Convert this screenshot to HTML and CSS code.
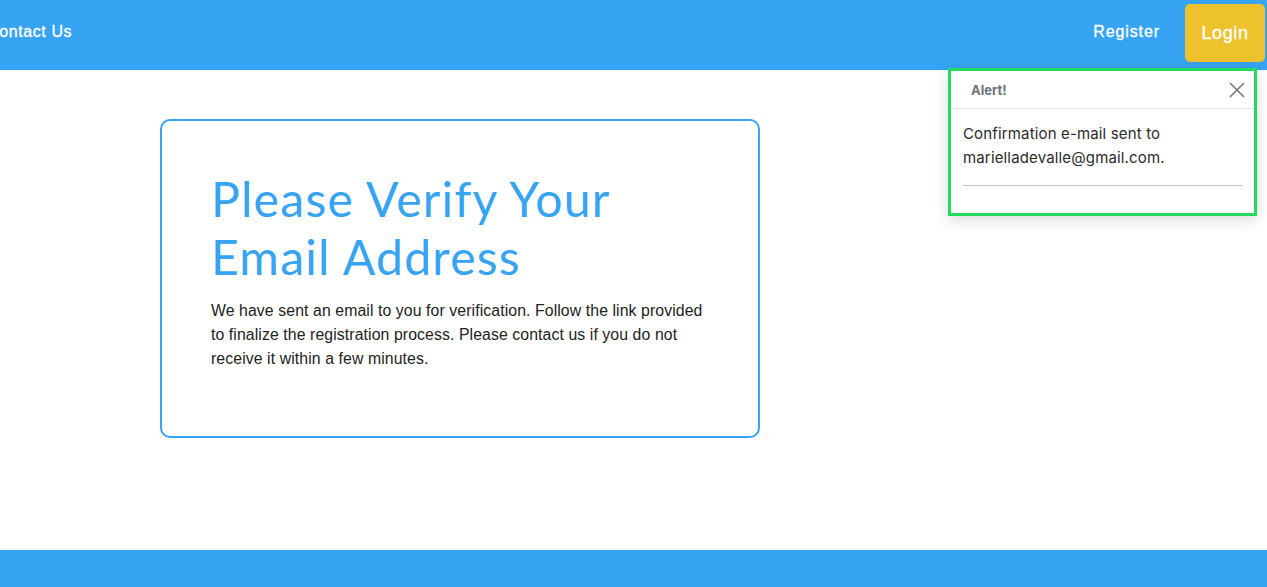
FILE: index.html
```html
<!DOCTYPE html>
<html lang="en">
<head>
<meta charset="utf-8">
<title>Verify Email</title>
<link rel="stylesheet" href="styles.css">
</head>
<body>
<header class="topbar">
  <nav class="nav-left">
    <a class="nav-link" href="#">Contact Us</a>
  </nav>
  <nav class="nav-right">
    <a class="nav-link" href="#">Register</a>
    <a class="login-btn" href="#">Login</a>
  </nav>
</header>

<main class="main">
  <section class="card">
    <h1 class="card-title">Please Verify Your Email Address</h1>
    <p class="card-text">We have sent an email to you for verification. Follow the link provided to finalize the registration process. Please contact us if you do not receive it within a few minutes.</p>
  </section>
</main>

<footer class="footer"></footer>

<div class="toast">
  <div class="toast-header">
    <strong class="toast-title">Alert!</strong>
    <button class="toast-close" aria-label="Close">
      <svg width="16" height="16" viewBox="0 0 16 16"><path d="M1 1 L15 15 M15 1 L1 15" stroke="#7a7a7a" stroke-width="1.6" fill="none"/></svg>
    </button>
  </div>
  <div class="toast-body">
    <p class="toast-text">Confirmation e-mail sent to marielladevalle@gmail.com.</p>
    <hr class="toast-rule">
  </div>
</div>
</body>
</html>
```

FILE: styles.css
```css
html, body {
  margin: 0;
  padding: 0;
}
body {
  font-family: "Liberation Sans", Arial, sans-serif;
  background: #ffffff;
  position: relative;
  min-height: 587px;
}
.topbar {
  height: 70px;
  background: #36a3f3;
  display: flex;
  align-items: flex-start;
  justify-content: space-between;
}
.nav-left {
  display: flex;
  margin-left: -13px;
  padding-top: 23px;
}
.nav-link {
  color: #ffffff;
  text-decoration: none;
  font-size: 16px;
  font-weight: 400;
  letter-spacing: 0.6px;
  line-height: 18px;
  -webkit-text-stroke: 0.3px #ffffff;
}
.nav-right {
  display: flex;
  align-items: flex-start;
  gap: 25px;
  padding-top: 4px;
  margin-right: 2px;
}
.nav-right .nav-link {
  padding-top: 19px;
  letter-spacing: 0.9px;
}
.login-btn {
  width: 80px;
  height: 58px;
  background: #eec22c;
  border-radius: 5px;
  color: #ffffff;
  text-decoration: none;
  font-size: 18px;
  font-weight: 400;
  letter-spacing: 0.6px;
  -webkit-text-stroke: 0.3px #ffffff;
  display: flex;
  align-items: center;
  justify-content: center;
}
.main {
  height: 480px;
  padding: 49px 0 0 160px;
  box-sizing: border-box;
}
.card {
  width: 600px;
  height: 319px;
  box-sizing: border-box;
  border: 2px solid #36a3f3;
  border-radius: 10px;
  padding: 49px 49px 0 49px;
}
.card-title {
  margin: 0 0 13px 0;
  font-family: "Lato", sans-serif;
  font-weight: 400;
  font-size: 48px;
  line-height: 58px;
  letter-spacing: 1.3px;
  color: #36a3f3;
}
.card-text {
  margin: 0;
  font-size: 15.8px;
  line-height: 24px;
  letter-spacing: 0.1px;
  color: #222222;
}
.footer {
  height: 37px;
  background: #36a3f3;
}
.toast {
  position: absolute;
  top: 68px;
  right: 10px;
  width: 309px;
  height: 148px;
  box-sizing: border-box;
  border: 3px solid #22da5e;
  background: #ffffff;
  box-shadow: 0 4px 14px rgba(0, 0, 0, 0.15);
  font-family: "Inter", "Noto Sans", sans-serif;
}
.toast-header {
  height: 38px;
  box-sizing: border-box;
  border-bottom: 1px solid #e9e9e9;
  display: flex;
  align-items: center;
  justify-content: space-between;
  padding: 1px 9px 0 20px;
}
.toast-title {
  font-size: 13px;
  font-weight: 700;
  color: #6c757d;
}
.toast-close {
  border: none;
  background: none;
  padding: 0;
  width: 16px;
  height: 16px;
  display: flex;
}
.toast-body {
  padding: 13px 11px 0 12px;
}
.toast-text {
  margin: 0;
  font-size: 15px;
  line-height: 24px;
  letter-spacing: 0.15px;
  color: #2a2a2a;
}
.toast-rule {
  margin: 15px 0 0 0;
  border: none;
  border-top: 1px solid #c8c8c8;
}
```
